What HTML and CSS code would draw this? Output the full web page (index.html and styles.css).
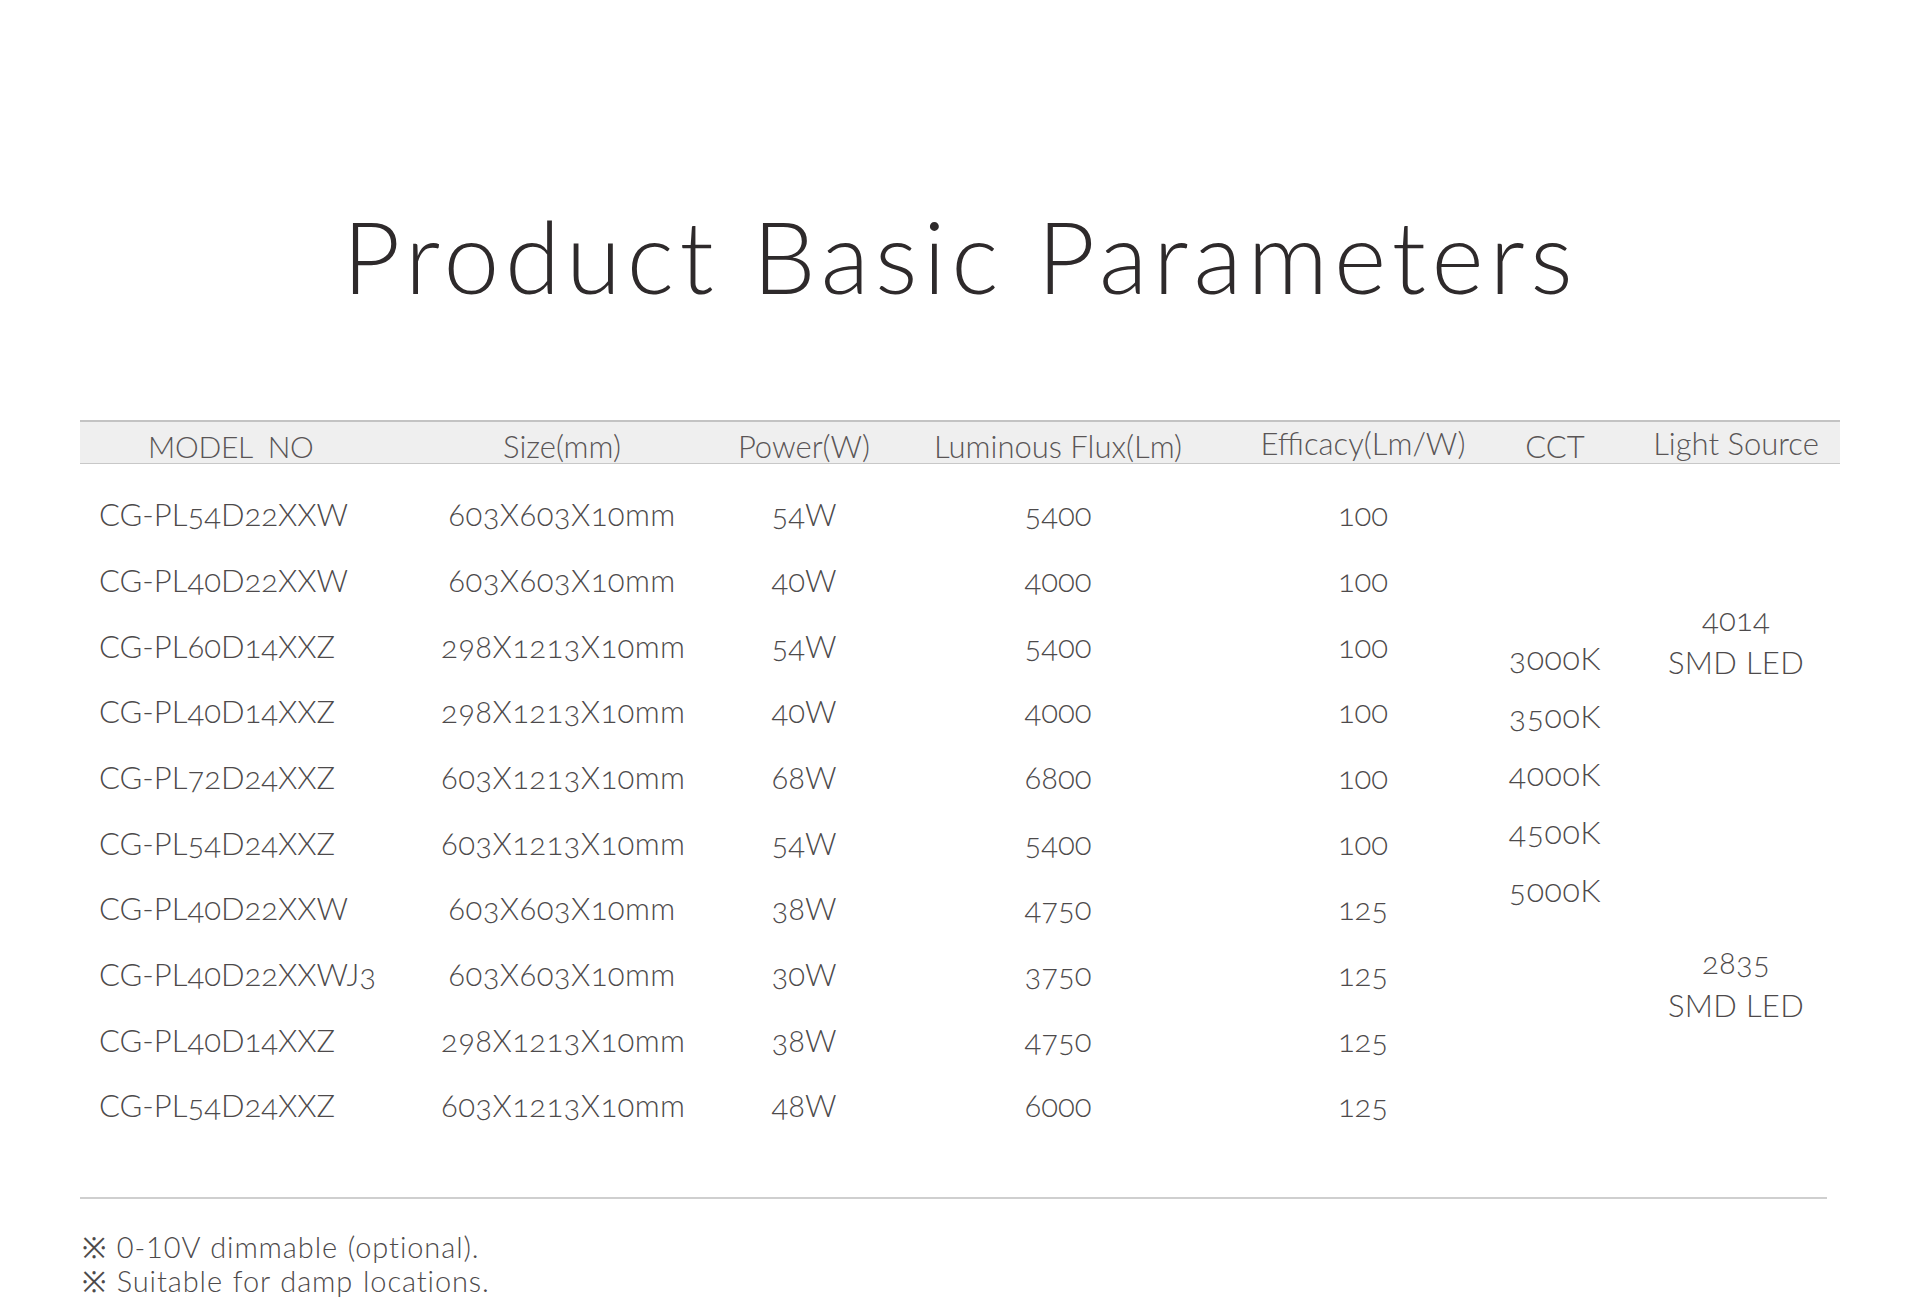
FILE: index.html
```html
<!DOCTYPE html>
<html lang="en">
<head>
<meta charset="utf-8">
<title>Product Basic Parameters</title>
<link rel="stylesheet" href="styles.css">
</head>
<body>
<div class="page">
  <h1 class="title">Product Basic Parameters</h1>
  <section class="params">
    <div class="head grid">
      <div class="c1 hcell model-h">MODEL&nbsp; NO</div>
      <div class="c2 hcell">Size(mm)</div>
      <div class="c3 hcell">Power(W)</div>
      <div class="c4 hcell">Luminous Flux(Lm)</div>
      <div class="c5 hcell up">Efficacy(Lm/W)</div>
      <div class="c6 hcell">CCT</div>
      <div class="c7 hcell up">Light Source</div>
    </div>
    <div class="body grid">
      <div class="cct">
        <span>3000K</span><span>3500K</span><span>4000K</span><span>4500K</span><span>5000K</span>
      </div>
      <div class="src">
        <div class="src-group first"><span>4014</span><span>SMD LED</span></div>
        <div class="src-group second"><span>2835</span><span>SMD LED</span></div>
      </div>

      <div class="c1 cell model">CG-PL54D22XXW</div><div class="c2 cell">603X603X10mm</div><div class="c3 cell">54W</div><div class="c4 cell">5400</div><div class="c5 cell">100</div>
      <div class="c1 cell model">CG-PL40D22XXW</div><div class="c2 cell">603X603X10mm</div><div class="c3 cell">40W</div><div class="c4 cell">4000</div><div class="c5 cell">100</div>
      <div class="c1 cell model">CG-PL60D14XXZ</div><div class="c2 cell">298X1213X10mm</div><div class="c3 cell">54W</div><div class="c4 cell">5400</div><div class="c5 cell">100</div>
      <div class="c1 cell model">CG-PL40D14XXZ</div><div class="c2 cell">298X1213X10mm</div><div class="c3 cell">40W</div><div class="c4 cell">4000</div><div class="c5 cell">100</div>
      <div class="c1 cell model">CG-PL72D24XXZ</div><div class="c2 cell">603X1213X10mm</div><div class="c3 cell">68W</div><div class="c4 cell">6800</div><div class="c5 cell">100</div>
      <div class="c1 cell model">CG-PL54D24XXZ</div><div class="c2 cell">603X1213X10mm</div><div class="c3 cell">54W</div><div class="c4 cell">5400</div><div class="c5 cell">100</div>
      <div class="c1 cell model">CG-PL40D22XXW</div><div class="c2 cell">603X603X10mm</div><div class="c3 cell">38W</div><div class="c4 cell">4750</div><div class="c5 cell">125</div>
      <div class="c1 cell model">CG-PL40D22XXWJ3</div><div class="c2 cell">603X603X10mm</div><div class="c3 cell">30W</div><div class="c4 cell">3750</div><div class="c5 cell">125</div>
      <div class="c1 cell model">CG-PL40D14XXZ</div><div class="c2 cell">298X1213X10mm</div><div class="c3 cell">38W</div><div class="c4 cell">4750</div><div class="c5 cell">125</div>
      <div class="c1 cell model">CG-PL54D24XXZ</div><div class="c2 cell">603X1213X10mm</div><div class="c3 cell">48W</div><div class="c4 cell">6000</div><div class="c5 cell">125</div>
    </div>
    <hr class="sep">
    <div class="notes">
      <p>※&nbsp;0-10V dimmable (optional).</p>
      <p>※&nbsp;Suitable for damp locations.</p>
    </div>
  </section>
</div>
</body>
</html>
```

FILE: styles.css
```css
html, body {
  margin: 0;
  padding: 0;
  background: #ffffff;
}

.page {
  width: 1921px;
  padding-top: 195px;
  font-family: Lato, "Liberation Sans", sans-serif;
  font-weight: 300;
  color: #4d4a4b;
}

.title {
  margin: 0;
  text-align: center;
  font-family: Lato, "Liberation Sans", sans-serif;
  font-weight: 300;
  font-size: 100px;
  line-height: 120px;
  letter-spacing: 5.8px;
  color: #2e2a2b;
}

.params {
  margin: 105px 0 0 80px;
  width: 1760px;
}

.grid {
  display: grid;
  grid-template-columns: 361px 242px 242px 266px 69px 206px 178px 184px;
}

.head {
  height: 41px;
  background: #efefef;
  border-top: 2px solid #c3c3c3;
  border-bottom: 1px solid #c8c8c8;
  align-items: center;
}

.hcell {
  text-align: center;
  font-size: 31px;
  line-height: 34px;
  margin-top: 6px;
  color: #595556;
}

.hcell.up {
  margin-top: 0;
}

.model-h {
  text-align: left;
  padding-left: 68px;
  font-size: 30px;
  letter-spacing: -0.3px;
}

.c1 { grid-column: 1; }
.c2 { grid-column: 2; }
.c3 { grid-column: 3; }
.c4 { grid-column: 4; }
.c5 { grid-column: 6; }
.c6 { grid-column: 7; }
.c7 { grid-column: 8; }

.body {
  margin-top: 19px;
  grid-auto-rows: 65.67px;
  align-items: center;
}

.cell {
  text-align: center;
  font-size: 31px;
  line-height: 40px;
  margin-top: -3px;
  font-variant-numeric: oldstyle-nums;
  color: #4d4a4b;
}

.cell.c2 {
  letter-spacing: 0.4px;
}

.cell.model {
  text-align: left;
  padding-left: 19px;
}

.cct {
  grid-column: 7;
  grid-row: 1 / span 10;
  align-self: start;
  display: flex;
  flex-direction: column;
  align-items: center;
  padding-top: 146px;
  font-size: 32px;
  line-height: 58px;
  letter-spacing: 0.6px;
  font-variant-numeric: oldstyle-nums;
}

.src {
  grid-column: 8;
  grid-row: 1 / span 10;
  align-self: start;
  display: flex;
  flex-direction: column;
  align-items: center;
  padding-top: 115px;
  font-size: 31px;
  line-height: 43px;
  letter-spacing: 0.3px;
  font-variant-numeric: oldstyle-nums;
}

.src-group {
  display: flex;
  flex-direction: column;
  align-items: center;
}

.src-group.second {
  margin-top: 257px;
}

.sep {
  margin: 57px 0 0 0;
  width: 1747px;
  height: 0;
  border: 0;
  border-top: 2px solid #cfcfcf;
}

.notes {
  margin-top: 31px;
}

.notes p {
  margin: 0;
  font-size: 29px;
  line-height: 34px;
  letter-spacing: 0.9px;
  word-spacing: 1px;
  color: #4d4a4b;
  padding-left: 2px;
}
```
